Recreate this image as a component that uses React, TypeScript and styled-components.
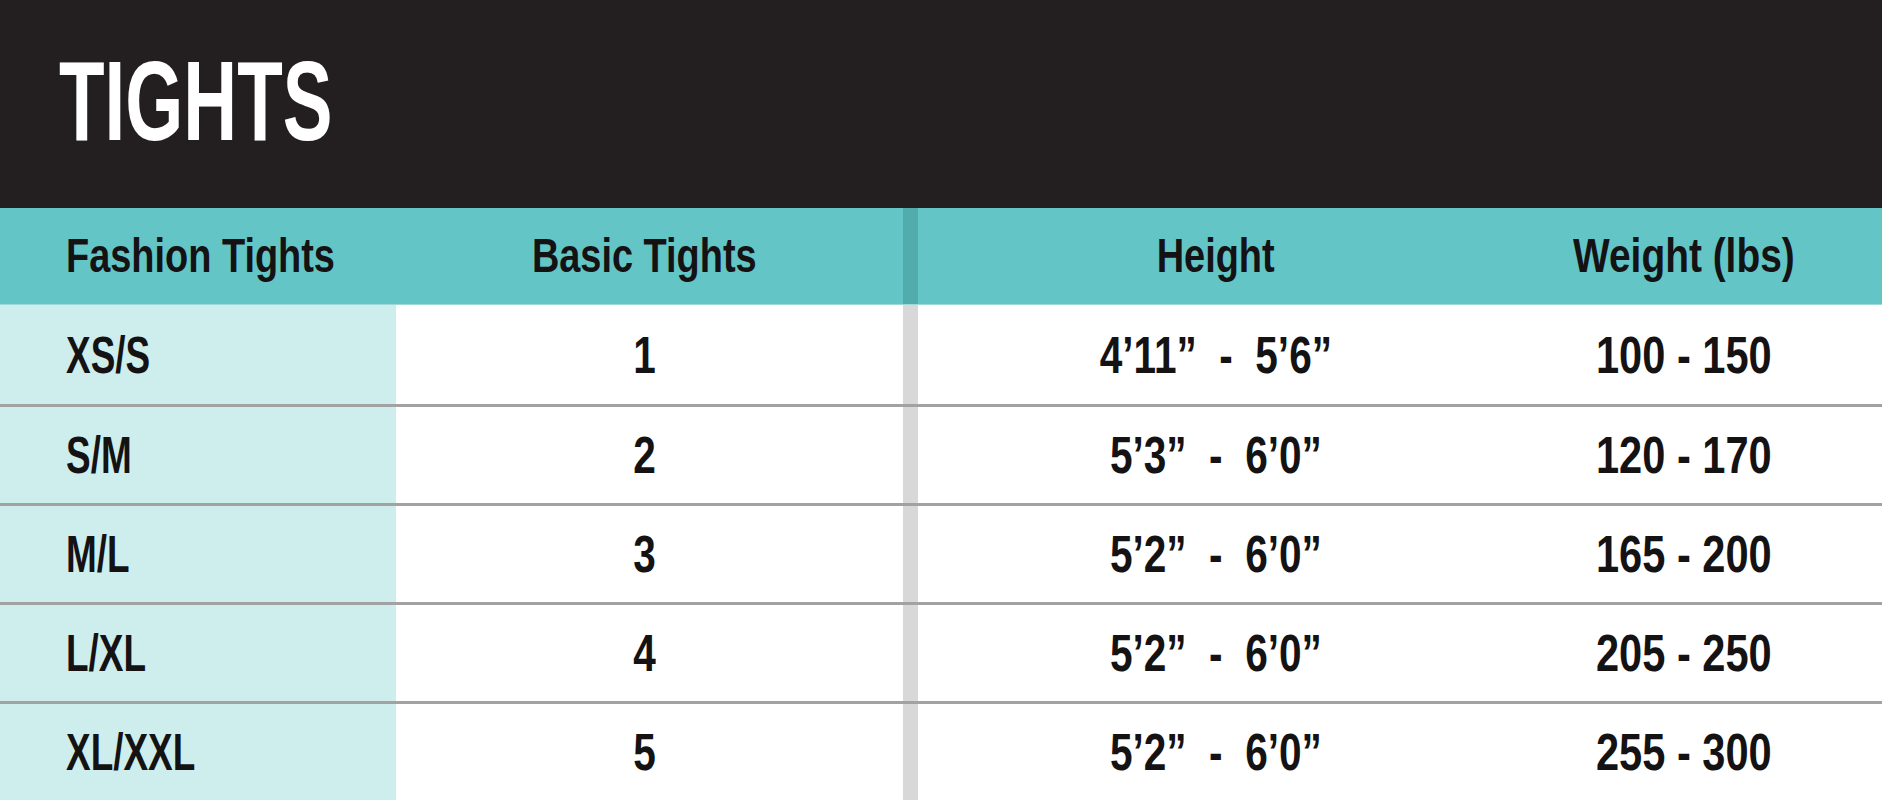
import React from 'react';
import styled, { createGlobalStyle } from 'styled-components';

interface sizeRow {
  fashion: string,
  basic: string,
  height: string,
  weight: string
}

const rows: sizeRow[] = [
  { fashion: 'XS/S', basic: '1', height: '4’11”  -  5’6”', weight: '100 - 150' },
  { fashion: 'S/M', basic: '2', height: '5’3”  -  6’0”', weight: '120 - 170' },
  { fashion: 'M/L', basic: '3', height: '5’2”  -  6’0”', weight: '165 - 200' },
  { fashion: 'L/XL', basic: '4', height: '5’2”  -  6’0”', weight: '205 - 250' },
  { fashion: 'XL/XXL', basic: '5', height: '5’2”  -  6’0”', weight: '255 - 300' },
];

const App = () => {
  return (
    <>
      <GlobalStyle />
      <Page>
        <TitleBar>
          <Title>TIGHTS</Title>
        </TitleBar>
        <Table>
          <HeadRow>
            <Cell align="left"><Label left squeeze={0.79}>Fashion Tights</Label></Cell>
            <Cell><Label squeeze={0.79}>Basic Tights</Label></Cell>
            <Divider head />
            <Cell><Label squeeze={0.79}>Height</Label></Cell>
            <Cell><Label squeeze={0.81}>Weight (lbs)</Label></Cell>
          </HeadRow>
          {rows.map((r, i) => (
            <BodyRow key={r.fashion} first={i === 0}>
              <Cell align="left" tint><Label left squeeze={0.71}>{r.fashion}</Label></Cell>
              <Cell><Label squeeze={0.78}>{r.basic}</Label></Cell>
              <Divider />
              <Cell><Label squeeze={0.78}>{r.height}</Label></Cell>
              <Cell><Label squeeze={0.8}>{r.weight}</Label></Cell>
            </BodyRow>
          ))}
        </Table>
      </Page>
    </>
  );
};

const GlobalStyle = createGlobalStyle`
  html, body {
    margin: 0;
    padding: 0;
    background: #fff;
  }
`;

const Page = styled.div`
  display: flex;
  flex-direction: column;
  width: 1882px;
  height: 800px;
  overflow: hidden;
  font-family: "Liberation Sans", Arial, sans-serif;
  font-weight: 700;
  color: #141213;
`;

const TitleBar = styled.div`
  display: flex;
  align-items: center;
  height: 208px;
  padding-left: 59px;
  background-color: #231f20;
  box-sizing: border-box;
`;

const Title = styled.h1`
  margin: 0;
  color: #fff;
  font-size: 113px;
  line-height: 1;
  font-weight: 700;
  transform: scaleX(0.66);
  transform-origin: left center;
  position: relative;
  top: -3px;
`;

const Table = styled.div`
  flex: 1;
  display: grid;
  grid-template-rows: 97px repeat(5, 1fr);
`;

const columns = '396px 507px 15px 606px 1fr';

const HeadRow = styled.div`
  display: grid;
  grid-template-columns: ${columns};
  background-color: #63c5c6;
  font-size: 48px;
  border-bottom: 1px solid #9fd8d8;
`;

const BodyRow = styled.div<{ first?: boolean }>`
  display: grid;
  grid-template-columns: ${columns};
  font-size: 52px;
  border-top: ${p => (p.first ? 'none' : '3px solid #a2a2a2')};
`;

const Cell = styled.div<{ align?: 'left' | 'center', tint?: boolean }>`
  display: flex;
  align-items: center;
  justify-content: ${p => (p.align === 'left' ? 'flex-start' : 'center')};
  padding-left: ${p => (p.align === 'left' ? '66px' : '0')};
  padding-right: ${p => (p.align === 'left' ? '0' : '10px')};
  background-color: ${p => (p.tint ? '#cdeeed' : 'transparent')};
  line-height: 1;

  &:last-child {
    padding-right: 38px;
  }
`;

const Label = styled.span<{ squeeze: number, left?: boolean }>`
  display: inline-block;
  white-space: pre;
  transform: scaleX(${p => p.squeeze});
  transform-origin: ${p => (p.left ? 'left center' : 'center center')};
`;

const Divider = styled.div<{ head?: boolean }>`
  background-color: ${p => (p.head ? '#52abac' : '#d8d8d8')};
`;

export default App;
